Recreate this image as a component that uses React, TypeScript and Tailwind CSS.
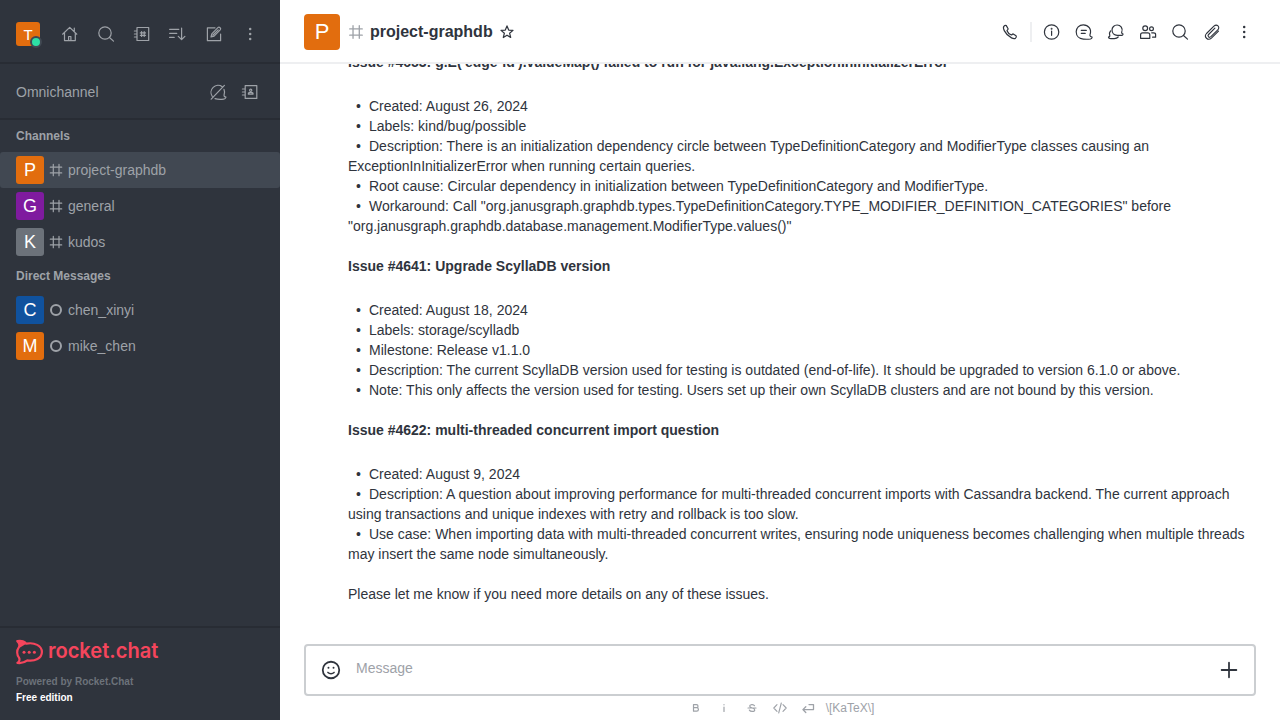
import React from 'react';

type IconProps = { children: React.ReactNode; className?: string; width?: number };

function Icon({ children, className = 'size-5', width = 1.2 }: IconProps) {
  return (
    <svg viewBox="0 0 20 20" className={`shrink-0 ${className}`} fill="none" stroke="currentColor" strokeWidth={width} strokeLinecap="round" strokeLinejoin="round">
      {children}
    </svg>
  );
}

const Home = () => (
  <Icon><path d="M2.6 10.2 9.7 3.4l7.1 6.8M4.5 9v7.6h10.8V9M14.3 4v3" /><path d="M8.6 16.4v-3.9h2.3v3.9" /></Icon>
);
const Search = () => (
  <Icon><circle cx="9" cy="9" r="6.2" /><path d="m13.5 13.5 4 3.6" /></Icon>
);
const Directory = () => (
  <Icon>
    <path d="M5 3.5h11.7v13H5zM2.4 7h2.4M2.4 10h2.4M2.4 13h2.4" />
    <path d="M9.6 7.6v4.8M12.2 7.6v4.8M8.3 8.9h5.2M8.3 11.3h5.2" />
  </Icon>
);
const Sort = () => (
  <Icon><path d="M1.6 5.3h9.2M1.6 9.3h7.2M1.6 13.4h4.6M13.6 4v11.3M10.3 12.4l3.3 3.2 3.3-3.2" /></Icon>
);
const Compose = () => (
  <Icon>
    <path d="M11 3.8H3.4v12.9h13.2V10" />
    <path d="m7 13 .8-3.2 6.1-6.1c1.4-1.4 3.7.7 2.3 2.2l-6.1 6.2L7 13ZM8.8 11.2l5.4-5.3" />
  </Icon>
);
const Kebab = () => (
  <Icon width={0}>
    <g fill="currentColor"><circle cx="10.2" cy="4.9" r="1.25" /><circle cx="10.2" cy="9.9" r="1.25" /><circle cx="10.2" cy="14.9" r="1.25" /></g>
  </Icon>
);
const OmniOff = () => (
  <Icon>
    <path d="M4.3 14.500A7.100 7.100 0 0 1 14.300 4.700M16 7.400c.8 1.800.8 3.600.1 5.400-.4 1.500.8 2.200 1.900 2.300-.4 1.300-1.300 2-2.300 2-2.900.3-6.200.3-8.700-.5" />
    <path d="M3.200 17.200 16.400 3.400" />
  </Icon>
);
const Contacts = () => (
  <Icon>
    <path d="M5.2 3.6h11.6v12.8H5.200zM2.4 7h2.5M2.4 10h2.5M2.4 13h2.5" />
    <circle cx="10.7" cy="8.2" r="1.1" /><path d="M8.4 12.2v-1.1c.6-.9 4-.9 4.6 0v1.1z" />
  </Icon>
);
const Hash = ({ className = 'size-5' }: { className?: string }) => (
  <Icon className={className}><path d="M7.3 4.3v11.4M13 4.3v11.4M4.3 7.2h11.4M4.3 12.9h11.4" /></Icon>
);
const Star = () => (
  <Icon><path d="m10 3.9 1.7 4.2 4.3.3-3.4 2.8 1.1 4.3L10 13.2l-3.7 2.3 1.1-4.3L4 8.4l4.3-.3z" /></Icon>
);
const Phone = () => (
  <Icon><path d="M3.8 4.4c.7-.8 1.700-1.300 2.500-.8l1.800 3.200c.3.6-.8 1.200-1.100 1.900.8 2.100 2.400 3.500 4.400 4.300.7-.3 1.200-1.300 1.800-1l2.900 1.800c.6.8.1 1.700-.6 2.400-1 .8-2.600.4-4-.3-3-1.500-5.600-4.100-7.100-7-.8-1.600-1.400-3.400-.6-4.500Z" /></Icon>
);
const Info = () => (
  <Icon><circle cx="9.6" cy="10" r="7.2" /><path d="M9.6 9v4.3" /><circle cx="9.6" cy="6.7" r=".35" fill="currentColor" /></Icon>
);
const Thread = () => (
  <Icon>
    <path d="M16 12.600C18 7.200 14.300 2.800 9.300 2.800c-4.200 0-7.100 3.200-7.100 7 0 4.200 3 7 7.100 7.300 2.500.2 5 .2 7.200-.1 1-.3 1.500-1.100 1.600-1.900-1.200-.1-2.500-.9-2.100-2.500Z" />
    <path d="M7.300 8.400h5M7.300 11.400h3.900" />
  </Icon>
);
const Discussion = () => (
  <Icon>
    <path d="M15.700 10.200C17.300 6.500 14.600 3 11.100 3 8.200 3 6 5.300 6 8.100c0 3 2.200 5.200 5.200 5.300 1.800.1 3.400.1 4.800-.1.700-.2 1-.8 1.100-1.300-.9-.1-1.600-.8-1.400-1.800Z" />
    <path d="M4.500 9c-1.100 1.300-1.300 3-.7 4.500.2 1-.5 1.500-1.300 1.700.1.700.5 1.200 1.200 1.300 1.400.2 3 .2 4.600.1 1.700-.1 3-.6 3.900-1.600" />
  </Icon>
);
const Team = () => (
  <Icon>
    <circle cx="7.2" cy="6.3" r="2.4" /><circle cx="13.5" cy="6.700" r="1.900" />
    <path d="M2.600 16.300v-3.500c0-1.200.8-2 2-2h5.200c1.200 0 2 .8 2 2v3.500zM13.700 10.800h1.900c1.300 0 2 .7 2 1.800v2.600h-3" />
  </Icon>
);
const Clip = () => (
  <Icon width={1.1}><path d="M16.500 9.200 9.400 16.100c-3.400 3.100-8-1.200-4.900-4.600l7.400-7.300c3-2.700 6.600.8 3.900 3.600l-6.900 6.900c-1.700 1.600-3.900-.5-2.300-2.200l6.300-6.300" /></Icon>
);

const avatarSizes = {
  small: 'size-6 rounded-[3px] text-[15px]',
  medium: 'size-7 rounded-[3px] text-[18px]',
  large: 'size-9 rounded-[4px] text-[22px]',
};

function Avatar({ letter, color, size = 'medium' }: { letter: string; color: string; size?: keyof typeof avatarSizes }) {
  return <div className={`flex shrink-0 items-center justify-center leading-none text-white ${avatarSizes[size]} ${color}`}>{letter}</div>;
}

function Row({ letter, color, name, direct, active }: { letter: string; color: string; name: string; direct?: boolean; active?: boolean }) {
  return (
    <div className={`flex h-9 items-center px-4 ${active ? 'rounded-[3px] bg-[#414852]' : ''}`}>
      <Avatar letter={letter} color={color} />
      <span className="ml-1 mr-1 flex size-4 items-center justify-center">
        {direct ? <span className="size-3 rounded-full border-2 border-[#9ea2a8]" /> : <Hash className="size-5" />}
      </span>
      <span className="text-[14px] leading-5">{name}</span>
    </div>
  );
}

const Section = ({ title }: { title: string }) => (
  <div className="flex h-8 items-center px-4 text-[12px] font-bold">{title}</div>
);

function Sidebar() {
  return (
    <aside className="flex w-[280px] shrink-0 flex-col bg-[#2f343d] text-[#9ea2a8]">
      <div className="flex h-16 shrink-0 items-center border-b-2 border-[#282c34] pl-4 pr-5 pt-[6px]">
        <div className="relative">
          <Avatar letter="T" color="bg-[#e26d0e]" size="small" />
          <span className="absolute -bottom-[2px] -right-[2px] size-3 rounded-full border-2 border-[#414852] bg-[#2de0a5]" />
        </div>
        <div className="ml-5 flex gap-4">
          <Home /><Search /><Directory /><Sort /><Compose /><Kebab />
        </div>
      </div>
      <div className="flex h-14 shrink-0 items-center justify-between border-b-2 border-[#282c34] pl-4 pr-5 pt-[2px]">
        <span className="text-[14px] leading-5">Omnichannel</span>
        <div className="flex gap-3"><OmniOff /><Contacts /></div>
      </div>
      <nav className="flex-1">
        <Section title="Channels" />
        <Row letter="P" color="bg-[#e26d0e]" name="project-graphdb" active />
        <Row letter="G" color="bg-[#7f1b9f]" name="general" />
        <Row letter="K" color="bg-[#6c727a]" name="kudos" />
        <Section title="Direct Messages" />
        <Row letter="C" color="bg-[#10529e]" name="chen_xinyi" direct />
        <Row letter="M" color="bg-[#e26d0e]" name="mike_chen" direct />
      </nav>
      <footer className="h-[94px] border-t-2 border-[#282c34] px-4 pt-3">
        <svg viewBox="0 0 143 24" className="h-6 w-[143px] overflow-visible text-[#f5455c]">
          <path d="M1.300 1.100c3.600-.7 6.900.2 9 2.600C18.500 2 25.900 5.800 25.900 12c0 6.300-7 9.400-14.500 8.400-2.800 2.100-6.400 3-10 2.500 2.200-1.600 2.600-3.500 1.600-5.300-2.300-2.700-2.500-7.300-.2-10.300C4 5.300 3.300 3 1.300 1.100Z" fill="none" stroke="currentColor" strokeWidth="2.200" strokeLinejoin="round" />
          <path d="M.6.600C5-.2 8.600.9 10.600 3.500L3.300 8C4.200 5 2.800 2.600.6.600Z" fill="currentColor" />
          <g fill="currentColor"><circle cx="8" cy="12.200" r="1.500" /><circle cx="13.200" cy="12.200" r="1.500" /><circle cx="18.400" cy="12.200" r="1.500" /></g>
          <text x="31.900" y="18.200" textLength="110.500" lengthAdjust="spacingAndGlyphs" fill="currentColor" className="font-['Inter',sans-serif] text-[21px] font-semibold">rocket.chat</text>
        </svg>
        <div className="mt-[10px] text-[10px] font-bold leading-4 text-[#6c727a]">Powered by Rocket.Chat</div>
        <div className="text-[10px] font-bold leading-4 text-white">Free edition</div>
      </footer>
    </aside>
  );
}

const issues = [
  {
    title: "Issue #4653: g.E('edge-id').valueMap() failed to run for java.lang.ExceptionInInitializerError",
    items: [
      'Created: August 26, 2024',
      'Labels: kind/bug/possible',
      'Description: There is an initialization dependency circle between TypeDefinitionCategory and ModifierType classes causing an ExceptionInInitializerError when running certain queries.',
      'Root cause: Circular dependency in initialization between TypeDefinitionCategory and ModifierType.',
      'Workaround: Call "org.janusgraph.graphdb.types.TypeDefinitionCategory.TYPE_MODIFIER_DEFINITION_CATEGORIES" before "org.janusgraph.graphdb.database.management.ModifierType.values()"',
    ],
  },
  {
    title: 'Issue #4641: Upgrade ScyllaDB version',
    items: [
      'Created: August 18, 2024',
      'Labels: storage/scylladb',
      'Milestone: Release v1.1.0',
      'Description: The current ScyllaDB version used for testing is outdated (end-of-life). It should be upgraded to version 6.1.0 or above.',
      'Note: This only affects the version used for testing. Users set up their own ScyllaDB clusters and are not bound by this version.',
    ],
  },
  {
    title: 'Issue #4622: multi-threaded concurrent import question',
    items: [
      'Created: August 9, 2024',
      'Description: A question about improving performance for multi-threaded concurrent imports with Cassandra backend. The current approach using transactions and unique indexes with retry and rollback is too slow.',
      'Use case: When importing data with multi-threaded concurrent writes, ensuring node uniqueness becomes challenging when multiple threads may insert the same node simultaneously.',
    ],
  },
];

function Messages() {
  return (
    <div className="flex h-[580px] shrink-0 flex-col justify-end overflow-hidden pb-[40px] pl-[68px] pr-7 text-[14px] leading-5">
      {issues.map((issue) => (
        <section key={issue.title} className="mb-5 shrink-0">
          <h2 className="mb-6 font-bold">{issue.title}</h2>
          <ul>
            {issue.items.map((item) => (
              <li key={item}>
                <span className="ml-2 mr-[8.100px]">•</span>{item}
              </li>
            ))}
          </ul>
        </section>
      ))}
      <p className="shrink-0">Please let me know if you need more details on any of these issues.</p>
    </div>
  );
}

function Composer() {
  return (
    <>
      <div className="mx-6 flex h-[52px] shrink-0 items-center rounded-[4px] border-2 border-[#cbced1] pl-[14px] pr-[14px]">
        <Icon className="size-[22px]" width={1.6}>
          <circle cx="10" cy="10" r="7.500" /><path d="M7.200 12.200c1.500 1.500 4.100 1.500 5.600 0" strokeWidth="1.400" />
          <g fill="currentColor" stroke="none"><circle cx="7.700" cy="8" r=".9" /><circle cx="12.300" cy="8" r=".9" /></g>
        </Icon>
        <span className="mb-1 ml-[14px] flex-1 text-[14px] text-[#9ea2a8]">Message</span>
        <Icon className="size-[22px]" width={1.6}><path d="M10 3.300v13.400M3.300 10h13.400" /></Icon>
      </div>
      <div className="flex h-6 shrink-0 items-center justify-center gap-2 text-[12px] text-[#9ea2a8]">
        <Icon width={1.2}><path d="M7.500 6.600h3c2 0 2 3.100 0 3.100h-3zM7.500 9.700h3.200c2.300 0 2.300 3.500 0 3.500H7.500z" /></Icon>
        <Icon width={1.2}><path d="M10 9v4.500M10 6.700v.1" /></Icon>
        <Icon width={1.2}><path d="M12.500 7.700c-.8-1.700-4.800-1.500-4.800.4 0 2.600 5 1.200 5 3.800 0 2-4.300 2.100-5.300.2M6 10h8" /></Icon>
        <Icon width={1.1}><path d="M7 6.700 3.800 10 7 13.300M13 6.700l3.200 3.300-3.200 3.300M11.300 5 8.700 15" /></Icon>
        <Icon width={1.3}><path d="M11 6.600h4.500v5H5.200M7.800 8.700 4.900 11.600l2.900 2.900" /></Icon>
        <span className="leading-4">{'\\[KaTeX\\]'}</span>
      </div>
    </>
  );
}

export default function App() {
  return (
    <div className="flex h-[720px] w-[1280px] overflow-hidden bg-white font-['Liberation_Sans',sans-serif] text-[#2f343d]">
      <Sidebar />
      <main className="flex min-w-0 flex-1 flex-col">
        <header className="flex h-16 shrink-0 items-center border-b-2 border-[#eeeff1] pl-6 pr-[26px] pt-[2px]">
          <Avatar letter="P" color="bg-[#e26d0e]" size="large" />
          <span className="ml-[4px] mr-px flex w-6 items-center justify-center text-[#9ea2a8]"><Hash className="size-[22px]" /></span>
          <h1 className="ml-px mr-1 text-[16px] font-bold leading-6">project-graphdb</h1>
          <Star />
          <div className="ml-auto flex items-center gap-3">
            <Phone />
            <div className="flex items-center gap-[10px]">
              <span className="-ml-[2px] h-5 w-[2px] bg-[#eeeff1]" />
              <Info />
            </div>
            <Thread /><Discussion /><Team /><Search /><Clip /><Kebab />
          </div>
        </header>
        <Messages />
        <Composer />
      </main>
    </div>
  );
}
